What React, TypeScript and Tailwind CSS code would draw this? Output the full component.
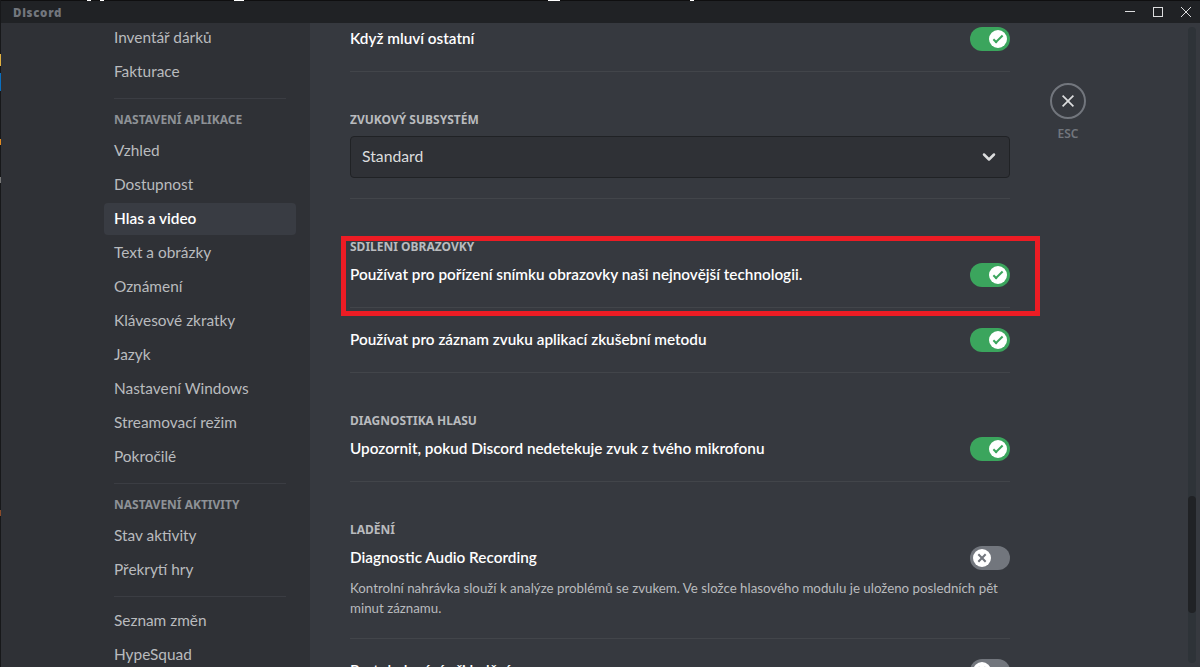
import { ChevronDown } from "lucide-react";

const rowText = "-mt-0.5 font-['Lato',sans-serif] text-[15.3px] leading-5 font-semibold text-[#ffffff]";
const headText = "text-[12px] leading-4 font-bold uppercase text-[#b9bbbe]";

function CloseIcon({ className }: { className: string }) {
  return (
    <svg viewBox="0 0 24 24" className={className} fill="currentColor">
      <path d="M18.4 4L12 10.4 5.6 4 4 5.6 10.4 12 4 18.4 5.6 20 12 13.6 18.4 20 20 18.4 13.6 12 20 5.6z" />
    </svg>
  );
}

function Toggle({ on = true }: { on?: boolean }) {
  return (
    <div
      className={`flex h-6 w-10 shrink-0 items-center rounded-full px-[3px] ${
        on ? "justify-end bg-[#3ba55d]" : "justify-start bg-[#72767d]"
      }`}
    >
      <div className="flex h-[18px] w-[18px] items-center justify-center rounded-full bg-white">
        {on ? (
          <svg viewBox="0 0 20 20" className="h-[18px] w-[18px] text-[#3ba55d]" fill="currentColor">
            <path d="M7.89561 14.8538L6.30462 13.2629L14.3099 5.25755L15.9009 6.84854L7.89561 14.8538Z" />
            <path d="M4.08643 11.0903L5.67742 9.49929L9.4485 13.2704L7.85751 14.8614L4.08643 11.0903Z" />
          </svg>
        ) : (
          <svg viewBox="0 0 20 20" className="h-[18px] w-[18px] text-[#72767d]" fill="currentColor">
            <path d="M5.13231 6.72963L6.7233 5.13864L14.855 13.2704L13.264 14.8614L5.13231 6.72963Z" />
            <path d="M13.2704 5.13864L14.8614 6.72963L6.72963 14.8614L5.13864 13.2704L13.2704 5.13864Z" />
          </svg>
        )}
      </div>
    </div>
  );
}

function Row({ label, on = true }: { label: string; on?: boolean }) {
  return (
    <div className="flex h-6 items-center justify-between">
      <span className={rowText}>{label}</span>
      <Toggle on={on} />
    </div>
  );
}

function Sep({ className }: { className: string }) {
  return <div className={`h-px bg-[#42454a] ${className}`} />;
}

function NavSep({ className }: { className: string }) {
  return <div className={`mx-2.5 mt-2.5 h-px bg-[#3b3d43] ${className}`} />;
}

function NavItem({ label, active }: { label: string; active?: boolean }) {
  return (
    <div
      className={`mb-0.5 flex h-8 items-center rounded px-2.5 font-['Lato',sans-serif] text-[15.4px] ${
        active ? "bg-[#393c43] font-semibold text-white" : "text-[#b9bbbe]"
      }`}
    >
      {label}
    </div>
  );
}

function NavHead({ label }: { label: string }) {
  return (
    <div className="mb-1 flex h-[22px] items-center px-2.5 text-[12px] font-bold uppercase text-[#8e9297]">
      {label}
    </div>
  );
}

export default function App() {
  return (
    <div className="relative flex h-[667px] w-[1200px] flex-col overflow-hidden bg-[#36393f] font-['Noto_Sans',sans-serif]">
      {/* Title bar */}
      <div className="flex h-[23px] shrink-0 items-center justify-between bg-[#202225] pl-[13px]">
        <span className="pt-0.5 text-[11.5px] font-black tracking-[0.7px] text-[#72767d]">Discord</span>
        <div className="flex h-full items-center">
          <div className="flex h-full w-7 items-center justify-center">
            <div className="h-px w-2.5 bg-[#dcddde]" />
          </div>
          <div className="flex h-full w-7 items-center justify-center">
            <div className="h-2.5 w-2.5 border border-[#dcddde]" />
          </div>
          <div className="flex h-full w-7 items-center justify-center">
            <svg viewBox="0 0 10 10" className="h-2.5 w-2.5 text-[#dcddde]" stroke="currentColor" strokeWidth={1}>
              <path d="M0 0L10 10M10 0L0 10" />
            </svg>
          </div>
        </div>
      </div>

      <div className="flex min-h-0 flex-1">
        {/* Sidebar */}
        <div className="flex w-[310px] shrink-0 justify-end overflow-hidden bg-[#2f3136] pr-3.5">
          <div className="-mt-px w-[192px] shrink-0">
            <NavItem label="Inventář dárků" />
            <NavItem label="Fakturace" />
            <NavSep className="mb-2.5" />
            <NavHead label="Nastavení aplikace" />
            <NavItem label="Vzhled" />
            <NavItem label="Dostupnost" />
            <NavItem label="Hlas a video" active />
            <NavItem label="Text a obrázky" />
            <NavItem label="Oznámení" />
            <NavItem label="Klávesové zkratky" />
            <NavItem label="Jazyk" />
            <NavItem label="Nastavení Windows" />
            <NavItem label="Streamovací režim" />
            <NavItem label="Pokročilé" />
            <NavSep className="mb-2.5" />
            <NavHead label="Nastavení aktivity" />
            <NavItem label="Stav aktivity" />
            <NavItem label="Překrytí hry" />
            <NavSep className="mb-2" />
            <NavItem label="Seznam změn" />
            <NavItem label="HypeSquad" />
          </div>
        </div>

        {/* Content */}
        <div className="ml-10 w-[660px] shrink-0 overflow-hidden pt-1">
          <Row label="Když mluví ostatní" />
          <Sep className="mt-5 mb-10" />
          <div className={headText}>Zvukový subsystém</div>
          <div className="mt-2 flex h-[42px] items-center justify-between rounded border border-[#202225] bg-[#2f3136] pl-[11px] pr-2.5 font-['Lato',sans-serif] text-[15.75px] text-[#dcddde]">
            <span className="pb-0.5">Standard</span>
            <ChevronDown className="h-5 w-5 text-[#dcddde]" strokeWidth={3} />
          </div>
          <Sep className="mt-5 mb-10" />
          <div className={headText}>Sdilení obrazovky</div>
          <div className="mt-2"><Row label="Používat pro pořízení snímku obrazovky naši nejnovější technologii." /></div>
          <Sep className="mt-5 mb-5" />
          <Row label="Používat pro záznam zvuku aplikací zkušební metodu" />
          <Sep className="mt-5 mb-10" />
          <div className={headText}>Diagnostika hlasu</div>
          <div className="mt-2"><Row label="Upozornit, pokud Discord nedetekuje zvuk z tvého mikrofonu" /></div>
          <Sep className="mt-5 mb-10" />
          <div className={headText}>Ladění</div>
          <div className="mt-2"><Row label="Diagnostic Audio Recording" on={false} /></div>
          <p className="mt-2 font-['Lato',sans-serif] text-[13.3px] leading-5 text-[#b9bbbe]">
            Kontrolní nahrávka slouží k analýze problémů se zvukem. Ve složce hlasového modulu je uloženo posledních pět minut záznamu.
          </p>
          <Sep className="mt-5 mb-5" />
          <Row label="Protokolování při ladění" on={false} />
        </div>

        {/* Close */}
        <div className="ml-10 flex w-9 shrink-0 flex-col items-center pt-[60px]">
          <div className="flex h-9 w-9 items-center justify-center rounded-full border-2 border-[#72767d]">
            <CloseIcon className="h-[18px] w-[18px] text-[#dcddde]" />
          </div>
          <div className="mt-1.5 text-[12px] font-semibold text-[#72767d]">ESC</div>
        </div>
      </div>

      {/* Scrollbar */}
      <div className="absolute right-1 top-[27px] bottom-1 w-2 rounded bg-[#2e3338]">
        <div className="absolute left-0 top-[469px] h-[117px] w-2 rounded bg-[#202225]" />
      </div>

      {/* Red highlight */}
      <div className="absolute left-[341px] top-[236px] h-[80px] w-[699px] border-[5px] border-[#ed1c24]" />

      {/* Bits of the desktop behind the window, top and left edge */}
      <div className="absolute inset-x-0 top-0 h-px bg-[#0f0f10]">
        <div className="absolute left-[87px] h-px w-1 bg-white" />
        <div className="absolute left-[100px] h-px w-1 bg-white" />
        <div className="absolute left-[234px] h-px w-2.5 bg-white" />
        <div className="absolute left-[548px] h-px w-3 bg-white" />
        <div className="absolute left-[690px] h-px w-1 bg-white" />
      </div>
      <div className="absolute inset-y-0 left-0 w-px bg-[#17181a]">
        <div className="absolute top-[54px] h-[12px] w-px bg-[#e0b040]" />
        <div className="absolute top-[73px] h-[18px] w-px bg-[#0a6fc0]" />
        <div className="absolute top-[139px] h-[6px] w-px bg-[#e08a20]" />
        <div className="absolute top-[177px] h-[6px] w-px bg-[#777777]" />
        <div className="absolute top-[510px] h-[6px] w-px bg-[#8a4a28]" />
      </div>
    </div>
  );
}
